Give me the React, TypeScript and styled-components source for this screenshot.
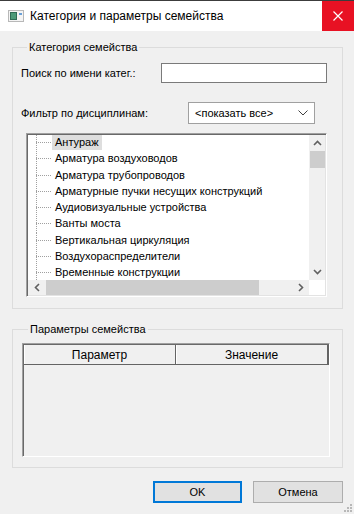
import React from "react";
import styled, { createGlobalStyle } from "styled-components";

const GlobalStyle = createGlobalStyle`
  html, body { margin: 0; padding: 0; }
  body {
    width: 354px;
    height: 514px;
    overflow: hidden;
    background: #f0f0f0;
    font-family: "Liberation Sans", Arial, sans-serif;
    font-size: 11px;
    color: #000;
  }
  * { box-sizing: border-box; }
`;

const Window = styled.div`
  position: relative;
  width: 354px;
  height: 514px;
  display: flex;
  flex-direction: column;
  border-top: 1px solid #3c3c3c;
  background: #f0f0f0;
`;

const TitleBar = styled.div`
  height: 30px;
  flex: none;
  display: flex;
  align-items: center;
  background: #fff;
`;

const TitleIcon = styled.svg`
  margin-left: 8px;
  flex: none;
`;

const TitleText = styled.div`
  margin-left: 6px;
  font-size: 12px;
  color: #000;
`;

const CloseButton = styled.div`
  margin-left: auto;
  width: 32px;
  height: 30px;
  background: #e81123;
  display: flex;
  align-items: center;
  justify-content: center;
`;

const Body = styled.div`
  flex: 1;
  display: flex;
  flex-direction: column;
  padding: 9px 11px 0 12px;
`;

const Group = styled.fieldset<{ $pad: string }>`
  margin: 0;
  min-width: 0;
  border: 1px solid #dcdcdc;
  padding: ${(p) => p.$pad};
  display: flex;
  flex-direction: column;
  & + & {
    margin-top: 13px;
  }
`;

const Legend = styled.legend`
  margin-left: 6px;
  padding: 0 2px;
  font-size: 11px;
  line-height: 14px;
  height: 14px;
`;

const FieldRow = styled.div<{ $h: number; $mt: number }>`
  display: flex;
  align-items: center;
  justify-content: space-between;
  height: ${(p) => p.$h}px;
  margin-top: ${(p) => p.$mt}px;
`;

const Label = styled.span`
  white-space: nowrap;
`;

const TextBox = styled.div`
  width: 166px;
  height: 20px;
  background: #fff;
  border: 1px solid #7a7a7a;
`;

const Combo = styled.div`
  width: 127px;
  height: 22px;
  margin-right: 12px;
  background: #fff;
  border: 1px solid #a0a0a0;
  display: flex;
  align-items: center;
  justify-content: space-between;
  padding: 0 6px 0 6px;
`;

const TreeBox = styled.div`
  margin-top: 9px;
  margin-left: 5px;
  height: 164px;
  border: 1px solid;
  border-color: #a0a0a0 #fff #fff #a0a0a0;
  padding: 1px;
  box-shadow: inset 1px 1px 0 #696969, inset -1px -1px 0 #e3e3e3;
`;

const TreeGrid = styled.div`
  height: 100%;
  display: grid;
  grid-template-columns: 1fr 16px;
  grid-template-rows: 1fr 15px;
  background: #fff;
`;

const TreeList = styled.div`
  overflow: hidden;
  display: flex;
  flex-direction: column;
`;

const TreeRow = styled.div`
  height: 16.25px;
  flex: none;
  display: flex;
  align-items: flex-start;
`;

const Connector = styled.span`
  flex: none;
  width: 16px;
  height: 16.25px;
  margin-left: 8px;
  background-image: repeating-linear-gradient(to bottom, #a0a0a0 0 1px, transparent 1px 2px),
    repeating-linear-gradient(to right, #a0a0a0 0 1px, transparent 1px 2px);
  background-size: 1px 100%, 100% 1px;
  background-position: 0 0, 0 7px;
  background-repeat: no-repeat;
`;

const ItemLabel = styled.span<{ $selected?: boolean }>`
  height: 15px;
  line-height: 15px;
  padding: 0 3px;
  white-space: nowrap;
  background: ${(p) => (p.$selected ? "#dedede" : "transparent")};
`;

const VScroll = styled.div`
  background: #f0f0f0;
  display: flex;
  flex-direction: column;
`;

const HScroll = styled.div`
  background: #f0f0f0;
  display: flex;
  align-items: stretch;
`;

const ArrowBox = styled.div<{ $w: number; $h: number }>`
  flex: none;
  width: ${(p) => p.$w}px;
  height: ${(p) => p.$h}px;
  display: flex;
  align-items: center;
  justify-content: center;
`;

const Track = styled.div<{ $vertical?: boolean }>`
  flex: 1;
  display: flex;
  flex-direction: ${(p) => (p.$vertical ? "column" : "row")};
  align-items: stretch;
`;

const Thumb = styled.div<{ $w?: number; $h?: number; $ml?: number }>`
  background: #cdcdcd;
  ${(p) => (p.$w ? `width: ${p.$w}px;` : "")}
  ${(p) => (p.$h ? `height: ${p.$h}px;` : "")}
  margin-left: ${(p) => p.$ml ?? 0}px;
`;

const Corner = styled.div`
  background: #fff;
`;

const DataTable = styled.div`
  height: 114px;
  border: 1px solid;
  border-color: #a0a0a0 #fff #fff #a0a0a0;
  box-shadow: inset 1px 1px 0 #696969;
  padding: 1px 0 0 1px;
  display: flex;
  flex-direction: column;
`;

const HeaderRow = styled.div`
  height: 20px;
  display: grid;
  grid-template-columns: 152px 1fr;
  border-bottom: 1px solid #646464;
  border-right: 2px solid #646464;
`;

const HeaderCell = styled.div<{ $last?: boolean }>`
  display: flex;
  align-items: center;
  justify-content: center;
  font-size: 12px;
  background: #f0f0f0;
  border-right: ${(p) => (p.$last ? "none" : "1px solid #646464")};
  box-shadow: inset 1px 0 0 #fff;
`;

const Footer = styled.div`
  margin-top: 13px;
  display: flex;
  justify-content: flex-end;
  gap: 11px;
`;

const Button = styled.div<{ $w: number; $default?: boolean }>`
  width: ${(p) => p.$w}px;
  height: 22px;
  display: flex;
  align-items: center;
  justify-content: center;
  font-size: 11px;
  background: #e1e1e1;
  border: 1px solid ${(p) => (p.$default ? "#0078d7" : "#adadad")};
  box-shadow: ${(p) => (p.$default ? "inset 0 0 0 1px #0078d7" : "none")};
`;

const Grip = styled.svg`
  position: absolute;
  right: 2px;
  bottom: 2px;
`;

const Chevron = ({ dir }: { dir: "up" | "down" | "left" | "right" }) => {
  const pts: Record<string, string> = {
    up: "1,5 4.5,1.5 8,5",
    down: "1,1 4.5,4.5 8,1",
    left: "5,1 1.5,4.5 5,8",
    right: "1,1 4.5,4.5 1,8",
  };
  const vertical = dir === "up" || dir === "down";
  return (
    <svg width={vertical ? 9 : 6} height={vertical ? 6 : 9} viewBox={vertical ? "0 0 9 6" : "0 0 6 9"}>
      <polyline points={pts[dir]} fill="none" stroke="#606060" strokeWidth="1.6" />
    </svg>
  );
};

const items = [
  "Антураж",
  "Арматура воздуховодов",
  "Арматура трубопроводов",
  "Арматурные пучки несущих конструкций",
  "Аудиовизуальные устройства",
  "Ванты моста",
  "Вертикальная циркуляция",
  "Воздухораспределители",
  "Временные конструкции",
];

export default function App() {
  return (
    <>
      <GlobalStyle />
      <Window>
        <TitleBar>
          <TitleIcon width="16" height="12" viewBox="0 0 16 12">
            <rect x="0.5" y="0.5" width="15" height="11" fill="#f4f4f4" stroke="#b8b8b8" />
            <rect x="2" y="2" width="7" height="8" fill="#2f6b55" />
            <rect x="3" y="3" width="5" height="6" fill="#4c9a78" />
            <rect x="11" y="3" width="3" height="2" fill="#6aa0d8" />
          </TitleIcon>
          <TitleText>Категория и параметры семейства</TitleText>
          <CloseButton>
            <svg width="10" height="10" viewBox="0 0 10 10">
              <path d="M0.5 0.5 L9.5 9.5 M9.5 0.5 L0.5 9.5" stroke="#fff" strokeWidth="1.2" />
            </svg>
          </CloseButton>
        </TitleBar>
        <Body>
          <Group $pad="9px 15px 11px 8px">
            <Legend>Категория семейства</Legend>
            <FieldRow $h={20} $mt={0}>
              <Label>Поиск по имени катег.:</Label>
              <TextBox />
            </FieldRow>
            <FieldRow $h={22} $mt={19}>
              <Label>Фильтр по дисциплинам:</Label>
              <Combo>
                <span>&lt;показать все&gt;</span>
                <svg width="10" height="6" viewBox="0 0 10 6">
                  <polyline points="0.5,0.5 5,5 9.5,0.5" fill="none" stroke="#404040" strokeWidth="1" />
                </svg>
              </Combo>
            </FieldRow>
            <TreeBox>
              <TreeGrid>
                <TreeList>
                  {items.map((it, i) => (
                    <TreeRow key={it}>
                      <Connector />
                      <ItemLabel $selected={i === 0}>{it}</ItemLabel>
                    </TreeRow>
                  ))}
                </TreeList>
                <VScroll>
                  <ArrowBox $w={16} $h={16}>
                    <Chevron dir="up" />
                  </ArrowBox>
                  <Track $vertical>
                    <Thumb $h={17} $ml={1} />
                  </Track>
                  <ArrowBox $w={16} $h={16}>
                    <Chevron dir="down" />
                  </ArrowBox>
                </VScroll>
                <HScroll>
                  <ArrowBox $w={17} $h={15}>
                    <Chevron dir="left" />
                  </ArrowBox>
                  <Track>
                    <Thumb $w={213} $ml={1} />
                  </Track>
                  <ArrowBox $w={17} $h={15}>
                    <Chevron dir="right" />
                  </ArrowBox>
                </HScroll>
                <Corner />
              </TreeGrid>
            </TreeBox>
          </Group>
          <Group $pad="7px 12px 10px 9px">
            <Legend>Параметры семейства</Legend>
            <DataTable>
              <HeaderRow>
                <HeaderCell>Параметр</HeaderCell>
                <HeaderCell $last>Значение</HeaderCell>
              </HeaderRow>
            </DataTable>
          </Group>
          <Footer>
            <Button $w={89} $default>
              OK
            </Button>
            <Button $w={90}>Отмена</Button>
          </Footer>
        </Body>
        <Grip width="8" height="8" viewBox="0 0 8 8">
          {[
            [6, 0],
            [3, 3],
            [6, 3],
            [0, 6],
            [3, 6],
            [6, 6],
          ].map(([x, y]) => (
            <rect key={`${x}-${y}`} x={x} y={y} width="2" height="2" fill="#b8b8b8" />
          ))}
        </Grip>
      </Window>
    </>
  );
}
